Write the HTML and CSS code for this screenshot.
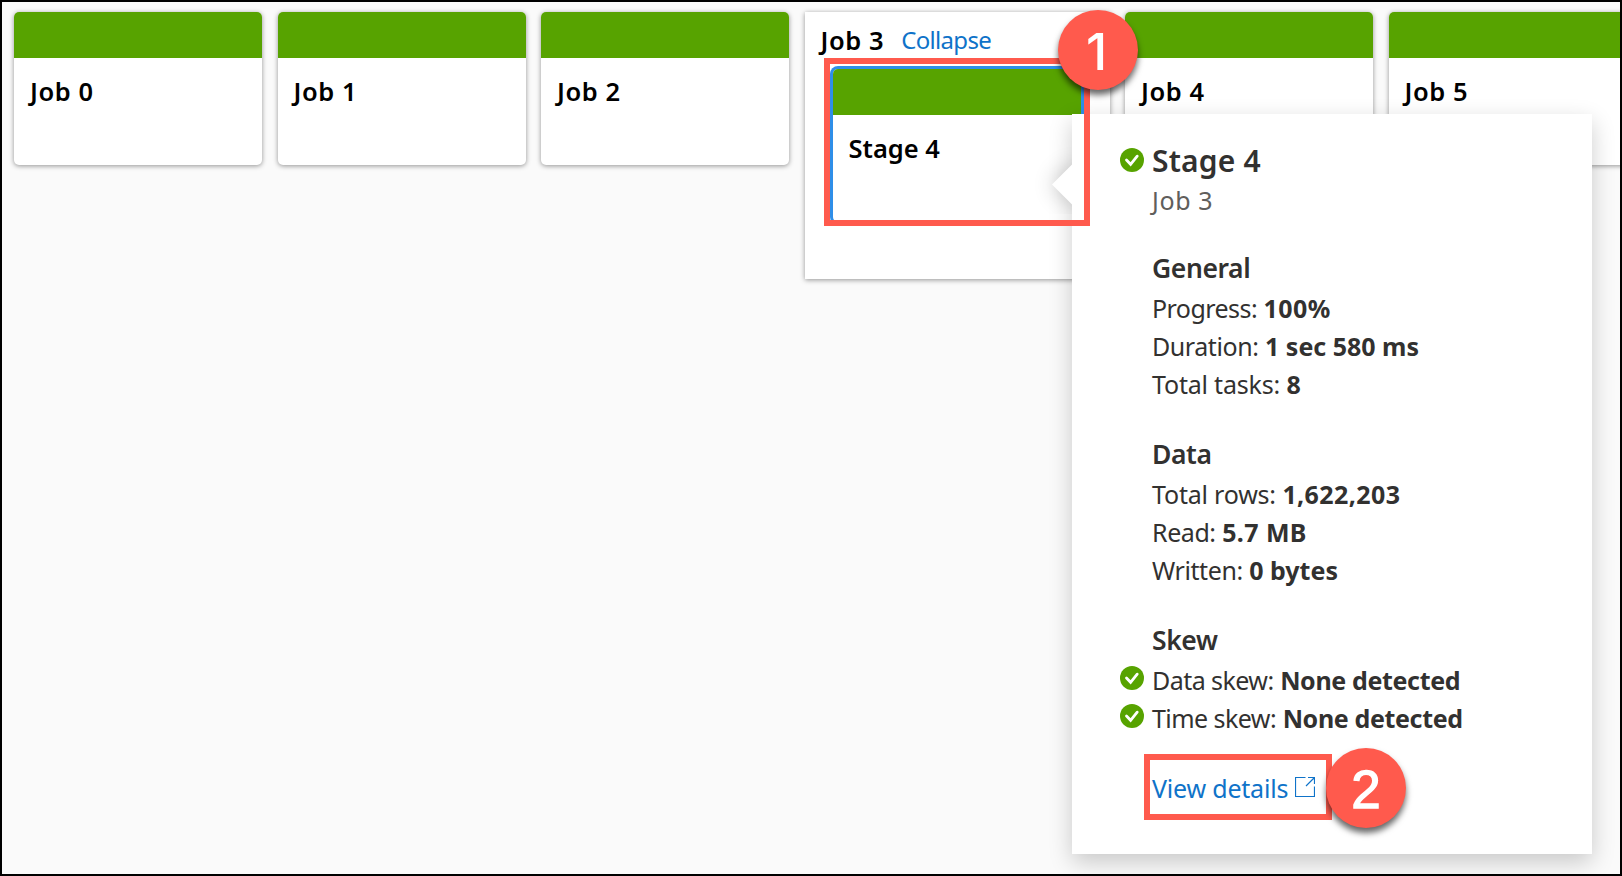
FILE: index.html
```html
<!DOCTYPE html>
<html lang="en">
<head>
<meta charset="utf-8">
<title>Job graph</title>
<link rel="stylesheet" href="styles.css">
</head>
<body>
<svg width="0" height="0" class="defs" aria-hidden="true">
  <symbol id="ok" viewBox="0 0 24 24">
    <circle cx="12" cy="12" r="12" fill="#57a300"/>
    <path d="M6.5 12.1l4.1 4.2 6.6-8.1" fill="none" stroke="#fff" stroke-width="2.8" stroke-linecap="round"/>
  </symbol>
</svg>
<main class="canvas">
  <div class="jobs">
    <article class="card"><div class="bar"></div><h2 class="title">Job 0</h2></article>
    <article class="card"><div class="bar"></div><h2 class="title">Job 1</h2></article>
    <article class="card"><div class="bar"></div><h2 class="title">Job 2</h2></article>
    <section class="group">
      <header class="group-head"><h2 class="title">Job 3</h2><a class="link collapse">Collapse</a></header>
      <article class="card stage"><div class="bar"></div><h2 class="title stage-title">Stage 4</h2></article>
    </section>
    <article class="card"><div class="bar"></div><h2 class="title">Job 4</h2></article>
    <article class="card"><div class="bar"></div><h2 class="title">Job 5</h2></article>
  </div>

  <aside class="callout">
    <div class="beak"><i class="beak-tip"></i></div>
    <div class="callout-body">
      <h1 class="name"><svg class="ok"><use href="#ok"/></svg><span>Stage 4</span></h1>
      <p class="parent">Job 3</p>
      <h3 class="heading general">General</h3>
      <p class="row tight"><span>Progress:</span> <b class="wide">100%</b></p>
      <p class="row"><span>Duration:</span> <b>1 sec 580 ms</b></p>
      <p class="row loose"><span>Total tasks:</span> <b>8</b></p>
      <h3 class="heading">Data</h3>
      <p class="row loose"><span>Total rows:</span> <b class="wide">1,622,203</b></p>
      <p class="row"><span>Read:</span> <b class="wide">5.7 MB</b></p>
      <p class="row"><span>Written:</span> <b>0 bytes</b></p>
      <h3 class="heading">Skew</h3>
      <p class="row tight"><svg class="ok"><use href="#ok"/></svg><span>Data skew:</span> <b class="narrow">None detected</b></p>
      <p class="row tight"><svg class="ok"><use href="#ok"/></svg><span>Time skew:</span> <b class="narrow">None detected</b></p>
      <a class="link details"><span>View details</span><svg class="open" viewBox="0 0 20 20"><path d="M10.5 .5H.5v19h19V9.5M13 .5h6.5v6.5M19.5 .5L11 9" fill="none" stroke="currentColor" stroke-width="1.2"/></svg></a>
    </div>
  </aside>

  <div class="mark mark-one"></div>
  <div class="mark mark-two"></div>
  <div class="pin pin-one">1</div>
  <div class="pin pin-two">2</div>
</main>
</body>
</html>
```
FILE: styles.css
```css
* { box-sizing: border-box; }
body { margin: 0; font-family: "Noto Sans", "Open Sans", sans-serif; }
h1, h2, h3, p { margin: 0; }
.defs { position: absolute; }
.canvas {
  position: relative;
  width: 1622px;
  height: 876px;
  border: 2px solid #000;
  background: #fafafa;
  overflow: hidden;
}
.jobs {
  display: flex;
  align-items: flex-start;
  gap: 15.5px;
  padding: 10px 0 0 12px;
}
.card {
  flex: none;
  width: 248px;
  height: 153px;
  border-radius: 5px;
  background: #fff;
  box-shadow: 0 1px 5px rgba(0, 0, 0, .42);
  overflow: hidden;
}
.bar { height: 45.5px; background: #57a300; }
.title {
  font-size: 25.5px;
  font-weight: 600;
  line-height: 36px;
  color: #000;
  white-space: nowrap;
  letter-spacing: .6px;
}
.stage-title { letter-spacing: 0; }
.card .title { padding: 15.5px 0 0 16px; }
.group {
  flex: none;
  width: 305px;
  height: 267px;
  background: #fff;
  box-shadow: 0 1px 5px rgba(0, 0, 0, .42);
}
.group-head {
  display: flex;
  align-items: baseline;
  gap: 17px;
  padding: 10px 0 0 16px;
  height: 57px;
}
.link { color: #0f73c9; white-space: nowrap; }
.collapse { position: relative; top: -1px; font-size: 24px; letter-spacing: -.7px; }
.stage { margin-left: 28px; box-shadow: 0 0 0 3px #2f8ee8; }

.callout {
  position: absolute;
  left: 1070px;
  top: 112px;
  width: 520px;
  height: 740px;
  background: #fff;
  box-shadow: 0 8px 22px rgba(0, 0, 0, .2);
  color: #323130;
}
.beak {
  position: absolute;
  left: -45px;
  top: 28px;
  width: 45px;
  height: 72px;
  overflow: hidden;
}
.beak-tip {
  position: absolute;
  left: 31px;
  top: 28px;
  width: 29px;
  height: 29px;
  background: #fff;
  transform: rotate(45deg);
  box-shadow: 0 0 22px rgba(0, 0, 0, .24);
}
.callout-body { padding: 26px 0 0 80px; white-space: nowrap; }
.ok { position: absolute; left: 48px; width: 24px; height: 24px; }
.name { font-size: 30px; font-weight: 560; line-height: 42px; letter-spacing: .2px; }
.name .ok { top: 34px; }
.parent {
  margin-top: -1px;
  font-size: 25px;
  line-height: 38px;
  color: #605e5c;
  letter-spacing: .6px;
}
.heading {
  margin: 32px 0 2px;
  font-size: 26.5px;
  font-weight: 560;
  line-height: 38px;
  letter-spacing: -.4px;
}
.general { margin-top: 30px; }
.row { font-size: 25px; line-height: 38px; }
.row span { letter-spacing: -.42px; }
.row.tight span { letter-spacing: -.55px; }
.row.loose span { letter-spacing: -.2px; }
.wide { letter-spacing: .4px; }
.narrow { letter-spacing: -.35px; }
.row .ok { margin-top: 5px; }
.details {
  display: flex;
  align-items: center;
  gap: 7px;
  margin-top: 32px;
  font-size: 25px;
  line-height: 38px;
  letter-spacing: -.2px;
}
.open { width: 20px; height: 20px; margin-bottom: 2px; }

.mark { position: absolute; border: 6px solid #ff5a4d; }
.mark-one { left: 822px; top: 56px; width: 266px; height: 168px; }
.mark-two { left: 1142px; top: 752px; width: 188px; height: 66px; }
.pin {
  position: absolute;
  width: 80px;
  height: 80px;
  border-radius: 50%;
  background: #ff5a4d;
  color: #fff;
  text-align: center;
  box-shadow: 0 5px 6px rgba(0, 0, 0, .6);
}
.pin-one { left: 1056px; top: 8px; padding-right: 3px; font: 500 51px/83px Inter, sans-serif; }
.pin-two {
  left: 1324px;
  top: 746px;
  font: 53px/83px "Liberation Sans", sans-serif;
  -webkit-text-stroke: 1.3px #fff;
}
```
